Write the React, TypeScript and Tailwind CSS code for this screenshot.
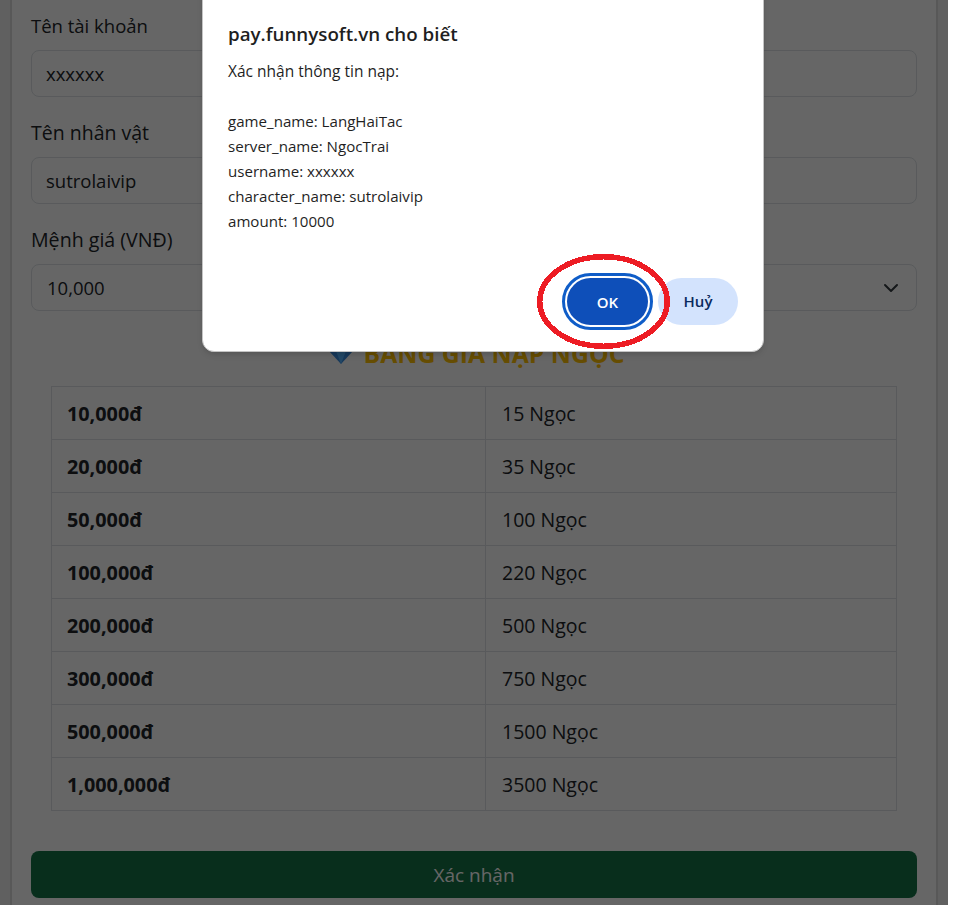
const rows = [
  ["10,000đ", "15 Ngọc"],
  ["20,000đ", "35 Ngọc"],
  ["50,000đ", "100 Ngọc"],
  ["100,000đ", "220 Ngọc"],
  ["200,000đ", "500 Ngọc"],
  ["300,000đ", "750 Ngọc"],
  ["500,000đ", "1500 Ngọc"],
  ["1,000,000đ", "3500 Ngọc"],
];

function Field({ label, labelSize, value, select }: { label: string; labelSize: string; value: string; select?: boolean }) {
  return (
    <div className="mb-[19px]">
      <div className={`mb-[8px] h-[33px] leading-[33px] text-[#212529] ${labelSize}`}>{label}</div>
      <div className={`flex h-[47px] items-center justify-between rounded-[8px] border border-[#dee2e6] bg-white pr-[17px] text-[18.5px] text-[#212529] ${select ? "pl-[15px]" : "pl-[14px]"}`}>
        <span>{value}</span>
        {select && (
          <svg width="16" height="16" viewBox="0 0 16 16" fill="none" stroke="#343a40" strokeWidth="2" strokeLinecap="round" strokeLinejoin="round">
            <path d="m2 5 6 6 6-6" />
          </svg>
        )}
      </div>
    </div>
  );
}

export default function App() {
  return (
    <div className="relative h-[905px] w-[959px] overflow-hidden bg-white font-['Open_Sans','Noto_Sans',sans-serif]">
      <div className="h-[905px] w-[948px] overflow-hidden bg-[#f0f0f0] px-[10px]">
        <div className="h-[905px] border-x-2 border-[#dcdcdc] bg-white px-[19px] pt-[9px]">
          <Field label="Tên tài khoản" labelSize="text-[18.5px]" value="xxxxxx" />
          <Field label="Tên nhân vật" labelSize="text-[19.5px]" value="sutrolaivip" />
          <Field label="Mệnh giá (VNĐ)" labelSize="text-[19.6px]" value="10,000" select />

          <div className="mt-[25px] flex h-[36px] items-center justify-center gap-[10px] pl-[4px] text-[24.8px] font-bold text-[#ffc107]">
            <svg width="26" height="24" viewBox="0 0 26 24">
              <path d="M1 9 7 3h12l6 6-12 13z" fill="#3c8fe0" />
              <path d="M8 9h10l-5 13z" fill="#58b4ff" />
            </svg>
            <span>BẢNG GIÁ NẠP NGỌC</span>
          </div>

          <div className="mx-[20px] mt-[14px] border border-[#dee2e6] text-[19.5px] text-[#212529]">
            {rows.map(([price, gems], i) => (
              <div key={price} className={`flex items-center ${i > 0 ? "h-[53px] border-t border-[#dee2e6]" : "h-[52px]"}`}>
                <div className="flex h-full w-[434px] items-center border-r border-[#dee2e6] pl-[15px] pt-[2px] text-[19.8px] font-bold">{price}</div>
                <div className="pl-[16px] pt-[2px]">{gems}</div>
              </div>
            ))}
          </div>

          <div className="mt-[40px] flex h-[47px] items-center justify-center rounded-[8px] bg-[#157347] pt-[2px] text-[19px] text-white">
            Xác nhận
          </div>
        </div>
      </div>

      {/* dim layer, stops before the white gutter on the right */}
      <div className="absolute left-0 top-0 h-[905px] w-[948px] bg-black/60" />

      <div className="absolute left-[202px] top-[-20px] h-[372px] w-[562px] rounded-[12px] border border-[#c4c4c4] bg-white px-[25px] pt-[39px] shadow-md">
        <div className="h-[28px] text-[18.75px] font-semibold leading-[28px] text-[#1f1f1f]">pay.funnysoft.vn cho biết</div>
        <div className="mt-[11px] whitespace-pre-line text-[15.1px] leading-[25px] text-[#1f1f1f]">
          <span className="text-[15.5px]">Xác nhận thông tin nạp:</span>
          {"\n\ngame_name: LangHaiTac\nserver_name: NgocTrai\nusername: xxxxxx\ncharacter_name: sutrolaivip\namount: 10000"}
        </div>
        <div className="mt-[44px] flex justify-end gap-[10px]">
          <div className="flex h-[47px] w-[81px] items-center justify-center rounded-full bg-[#0e4fb9] pt-[1px] text-[15px] font-semibold text-white outline-3 outline-offset-2 outline-[#0f5dc8]">
            OK
          </div>
          <div className="flex h-[47px] w-[80px] items-center justify-center rounded-full bg-[#d3e3fd] text-[15px] font-semibold text-[#0a2a5e]">
            Huỷ
          </div>
        </div>
      </div>

      {/* red marker circle drawn over the screenshot */}
      <svg className="absolute left-[530px] top-[245px]" width="150" height="115" shapeRendering="crispEdges">
        <ellipse cx="73.5" cy="56.5" rx="63.75" ry="44.75" fill="none" stroke="#ed1c24" strokeWidth="5.5" />
      </svg>
    </div>
  );
}
